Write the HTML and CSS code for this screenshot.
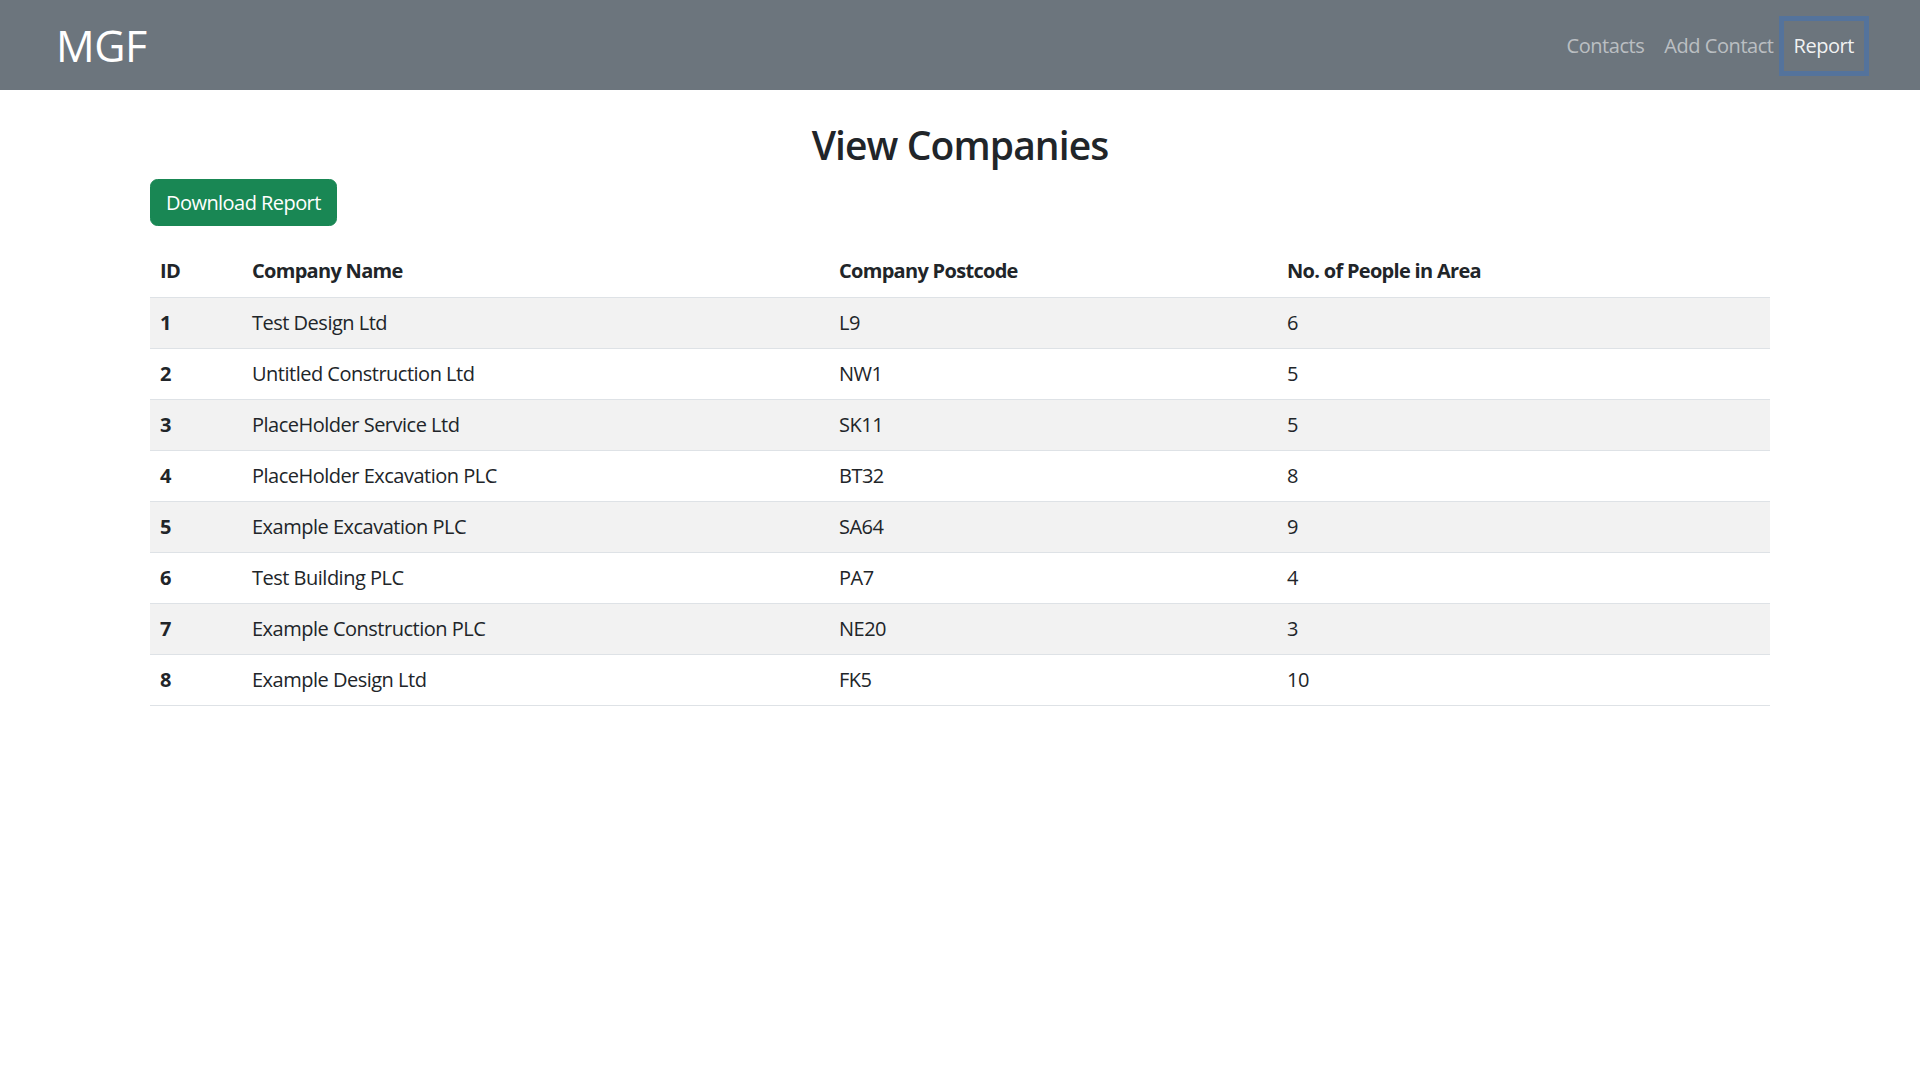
FILE: index.html
```html
<!DOCTYPE html>
<html lang="en">
<head>
<meta charset="utf-8">
<title>View Companies</title>
<link rel="stylesheet" href="styles.css">
</head>
<body>
<nav class="navbar">
  <a class="brand" href="#">MGF</a>
  <ul class="nav">
    <li><a class="nav-link" href="#">Contacts</a></li>
    <li><a class="nav-link" href="#">Add Contact</a></li>
    <li><a class="nav-link active" href="#">Report</a></li>
  </ul>
</nav>
<main class="container">
  <h2 class="title">View Companies</h2>
  <button class="btn">Download Report</button>
  <table class="table">
    <thead>
      <tr><th class="c-id">ID</th><th class="c-name">Company Name</th><th class="c-post">Company Postcode</th><th>No. of People in Area</th></tr>
    </thead>
    <tbody>
      <tr><th>1</th><td>Test Design Ltd</td><td>L9</td><td>6</td></tr>
      <tr><th>2</th><td>Untitled Construction Ltd</td><td>NW1</td><td>5</td></tr>
      <tr><th>3</th><td>PlaceHolder Service Ltd</td><td>SK11</td><td>5</td></tr>
      <tr><th>4</th><td>PlaceHolder Excavation PLC</td><td>BT32</td><td>8</td></tr>
      <tr><th>5</th><td>Example Excavation PLC</td><td>SA64</td><td>9</td></tr>
      <tr><th>6</th><td>Test Building PLC</td><td>PA7</td><td>4</td></tr>
      <tr><th>7</th><td>Example Construction PLC</td><td>NE20</td><td>3</td></tr>
      <tr><th>8</th><td>Example Design Ltd</td><td>FK5</td><td>10</td></tr>
    </tbody>
  </table>
</main>
</body>
</html>
```
FILE: styles.css
```css
* { box-sizing: border-box; }
html, body { margin: 0; padding: 0; }
body {
  font-family: "Segoe UI", "Open Sans", "Noto Sans", sans-serif;
  font-size: 20px;
  line-height: 30px;
  color: #212529;
  background: #fff;
}
.navbar {
  height: 90px;
  background: #6c757d;
  display: flex;
  align-items: center;
  justify-content: space-between;
  padding: 2px 56px 0 56px;
}
.brand {
  color: #fff;
  text-decoration: none;
  font-size: 43px;
  line-height: 50px;
  letter-spacing: -0.5px;
}
.nav {
  list-style: none;
  margin: 0;
  padding: 0;
  display: flex;
}
.nav-link {
  display: block;
  padding: 10px 10px;
  color: rgba(255,255,255,0.55);
  text-decoration: none;
  font-size: 20px;
  line-height: 30px;
  letter-spacing: -0.45px;
}
.nav-link.active {
  color: rgba(255,255,255,0.92);
  box-shadow: 0 0 0 5px rgba(13,110,253,0.25);
}
.container {
  width: 1620px;
  margin: 0 auto;
  padding-top: 31px;
}
.title {
  margin: 0 0 10px;
  text-align: center;
  font-size: 39px;
  line-height: 48px;
  font-weight: 600;
  letter-spacing: -0.9px;
}
.btn {
  display: inline-block;
  font-family: inherit;
  font-size: 20px;
  line-height: 30px;
  padding: 7.5px 15px;
  border: 1.25px solid #198754;
  border-radius: 7.5px;
  background: #198754;
  color: #fff;
  margin-bottom: 20px;
  letter-spacing: -0.55px;
}
.table {
  width: 100%;
  border-collapse: collapse;
  letter-spacing: -0.5px;
}
.table th, .table td {
  text-align: left;
  padding: 10px 10px;
  border-bottom: 1.25px solid #dee2e6;
  height: 51px;
}
.table th { font-weight: 700; letter-spacing: -0.7px; }
.table tbody tr:nth-child(odd) { background: #f2f2f2; }
.c-id { width: 92px; }
.c-name { width: 587px; }
.c-post { width: 448px; }
```
